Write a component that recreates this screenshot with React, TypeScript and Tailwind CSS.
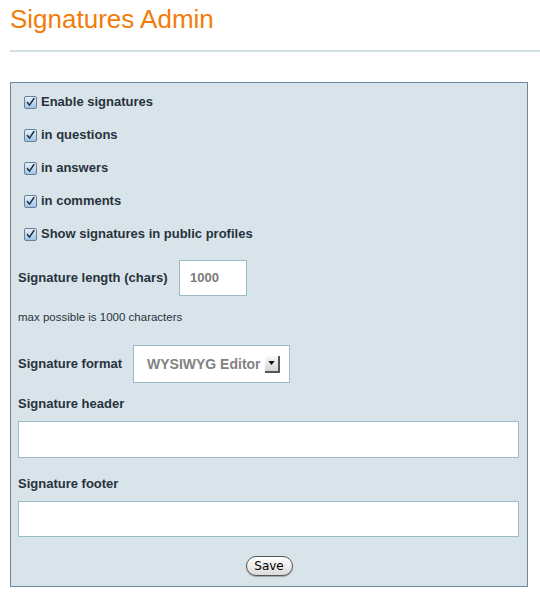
import React from 'react';

const Check: React.FC = () => (
  <span className="mt-[2px] inline-flex h-[13px] w-[13px] shrink-0 items-center justify-center rounded-[2px] border border-[#6b7f94] bg-gradient-to-b from-[#e6f1fb] to-[#9cc3e8]">
    <svg viewBox="0 0 13 13" className="h-[13px] w-[13px]">
      <path d="M2.8 6.6 L5.3 9.6 L10.6 1.8" fill="none" stroke="#1b2a3a" strokeWidth="1.7" strokeLinecap="round" strokeLinejoin="round" />
    </svg>
  </span>
);

const options = [
  'Enable signatures',
  'in questions',
  'in answers',
  'in comments',
  'Show signatures in public profiles',
];

const App: React.FC = () => {
  return (
    <div className="min-h-[600px] bg-white font-['Liberation_Sans',Arial,sans-serif] text-[#27323d]">
      <h1 className="pl-[10px] pt-[4px] text-[26px] leading-[30px] text-[#f27c0a]">Signatures Admin</h1>
      <div className="ml-[10px] mt-[16px] h-[2px] bg-[#cfe2e6]"></div>

      <div className="ml-[10px] mt-[30px] w-[518px] border border-[#6e899e] bg-[#d9e4ea] px-[7px] pb-[10px] pt-[2px]">
        {options.map((o) => (
          <label key={o} className="flex h-[33px] items-center gap-[4px] pl-[6px] text-[13px] font-bold">
            <Check />
            <span className="leading-[16px]">{o}</span>
          </label>
        ))}

        <div className="mt-[10px] flex h-[36px] items-center">
          <span className="w-[161px] text-[13px] font-bold">Signature length (chars)</span>
          <div className="flex h-[36px] w-[68px] items-center border border-[#9bbcc6] bg-white pl-[10px] text-[13px] font-bold text-[#7a7a7a]">
            1000
          </div>
        </div>

        <p className="mt-[15px] text-[11.5px] leading-[13px]">max possible is 1000 characters</p>

        <div className="mt-[21px] flex h-[38px] items-center">
          <span className="w-[115px] text-[13px] font-bold">Signature format</span>
          <div className="flex h-[38px] w-[157px] items-center border border-[#9bbcc6] bg-white pl-[13px] text-[14px] font-bold text-[#838383]">
            <span>WYSIWYG Editor</span>
            <span className="ml-[4px] flex h-[17px] w-[15px] items-center justify-center border-b-2 border-r-2 border-[#555] bg-gradient-to-b from-[#fafafa] to-[#d4d4d4]">
              <svg viewBox="0 0 8 5" className="h-[4px] w-[7px]">
                <path d="M0 0 H8 L4 5 Z" fill="#111" />
              </svg>
            </span>
          </div>
        </div>

        <p className="mt-[13px] text-[13px] font-bold leading-[16px]">Signature header</p>
        <div className="mt-[9px] h-[37px] w-[501px] border border-[#9bbcc6] bg-white"></div>

        <p className="mt-[18px] text-[13px] font-bold leading-[16px]">Signature footer</p>
        <div className="mt-[9px] h-[36px] w-[501px] border border-[#9bbcc6] bg-white"></div>

        <div className="mt-[19px] flex justify-center">
          <button className="flex h-[20px] w-[47px] items-center justify-center rounded-full border border-[#555] bg-gradient-to-b from-white to-[#dcdcdc] font-['DejaVu_Sans',sans-serif] text-[12px] text-black shadow-[0_1px_1px_rgba(0,0,0,0.3)]">
            Save
          </button>
        </div>
      </div>
    </div>
  );
};

export default App;
